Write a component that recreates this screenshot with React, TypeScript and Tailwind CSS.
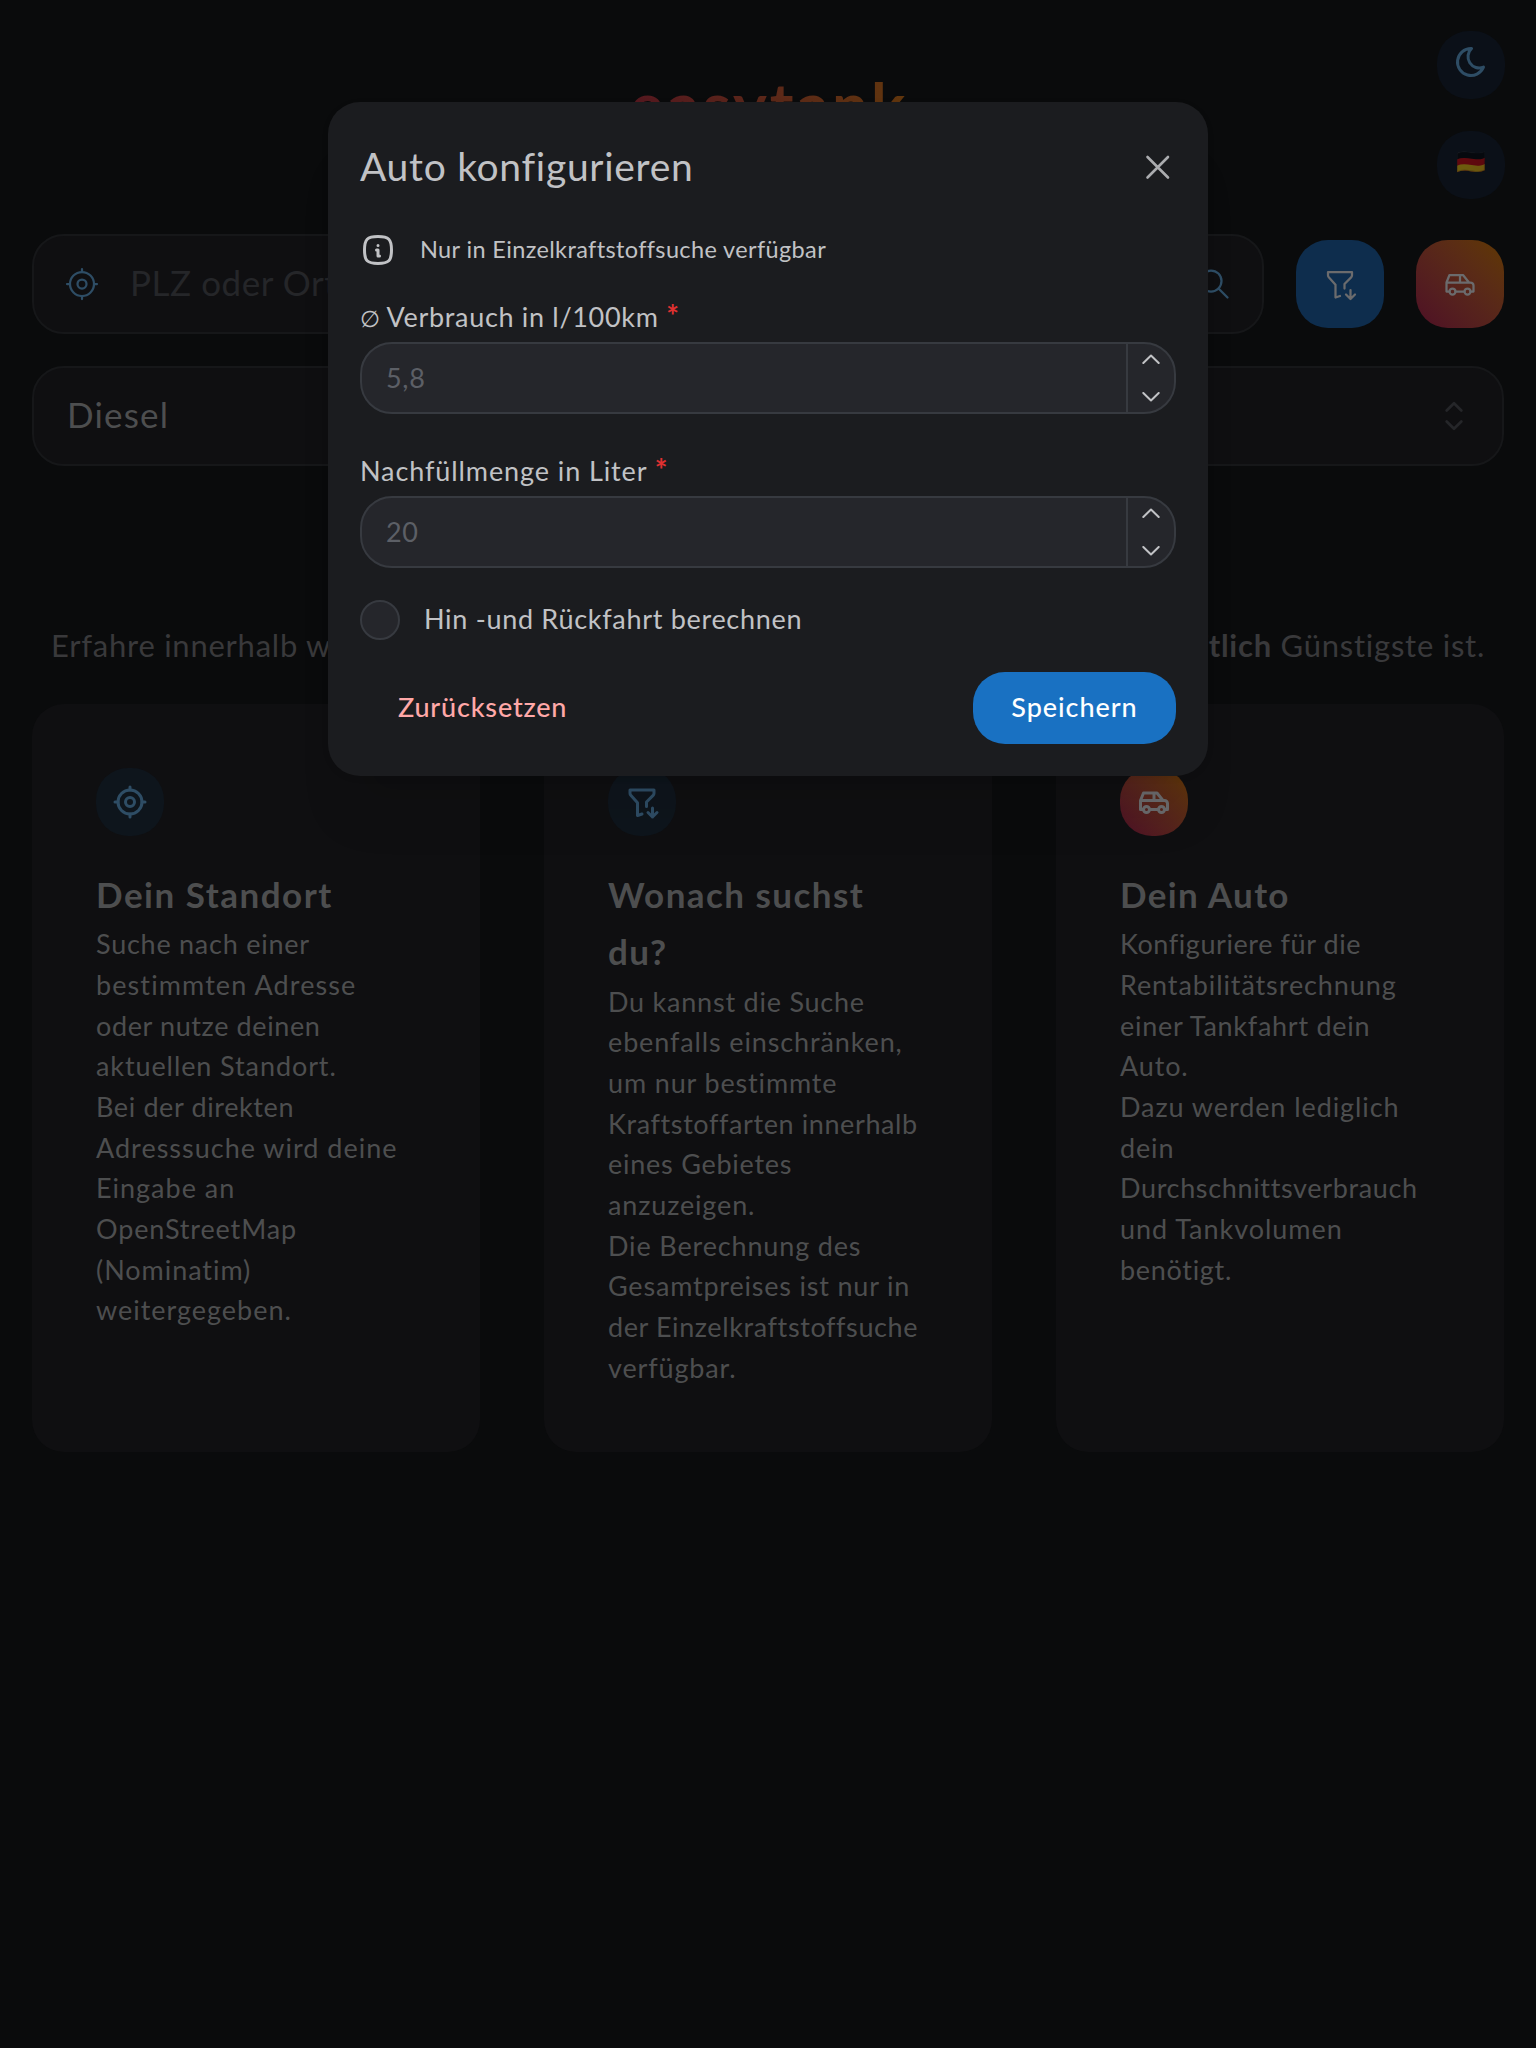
import type { ReactNode } from "react";

type IconProps = { size?: number; stroke?: number; className?: string };

function Icon({ size = 36, stroke = 1.5, className = "", children }: IconProps & { children: ReactNode }) {
  return (
    <svg
      width={size}
      height={size}
      viewBox="0 0 24 24"
      fill="none"
      stroke="currentColor"
      strokeWidth={stroke}
      strokeLinecap="round"
      strokeLinejoin="round"
      className={`shrink-0 ${className}`}
    >
      {children}
    </svg>
  );
}

const LocationIcon = (p: IconProps) => (
  <Icon {...p}>
    <circle cx="12" cy="12" r="3" />
    <circle cx="12" cy="12" r="8" />
    <path d="M12 2v2M12 20v2M20 12h2M2 12h2" />
  </Icon>
);

const FilterIcon = (p: IconProps) => (
  <Icon {...p}>
    <path d="M12 20l-3 1v-8.5l-4.48 -4.928a2 2 0 0 1 -.52 -1.345v-2.227h16v2.172a2 2 0 0 1 -.586 1.414l-4.414 4.414v3" />
    <path d="M19 16v6M22 19l-3 3l-3 -3" />
  </Icon>
);

const CarIcon = (p: IconProps) => (
  <Icon {...p}>
    <circle cx="7" cy="17" r="2" />
    <circle cx="17" cy="17" r="2" />
    <path d="M5 17h-2v-6l2 -5h9l4 5h1a2 2 0 0 1 2 2v4h-2m-4 0h-6m-6 -6h15m-6 0v-5" />
  </Icon>
);

const MoonIcon = (p: IconProps) => (
  <Icon {...p}>
    <path d="M12 3c.132 0 .263 0 .393 0a7.5 7.5 0 0 0 7.92 12.446a9 9 0 1 1 -8.313 -12.454z" />
  </Icon>
);

const SearchIcon = (p: IconProps) => (
  <Icon {...p}>
    <circle cx="10" cy="10" r="7" />
    <path d="M21 21l-6 -6" />
  </Icon>
);

const SelectorIcon = (p: IconProps) => (
  <Icon {...p}>
    <path d="M8 9l4 -4l4 4M16 15l-4 4l-4 -4" />
  </Icon>
);

const InfoIcon = (p: IconProps) => (
  <Icon {...p}>
    <path d="M12 9h.01M11 12h1v4h1" />
    <path d="M12 3c7.2 0 9 1.8 9 9s-1.8 9 -9 9s-9 -1.8 -9 -9s1.8 -9 9 -9z" />
  </Icon>
);

type Line = [text: string, tracking: string];

const standort: Line[] = [
  ["Suche nach einer", "tracking-[0.75px]"],
  ["bestimmten Adresse", "tracking-[1.1px]"],
  ["oder nutze deinen", "tracking-[0.62px]"],
  ["aktuellen Standort.", "tracking-[0.9px]"],
  ["Bei der direkten", "tracking-[0.62px]"],
  ["Adresssuche wird deine", "tracking-[1px]"],
  ["Eingabe an", "tracking-[1px]"],
  ["OpenStreetMap", "tracking-[0.85px]"],
  ["(Nominatim)", "tracking-[0.95px]"],
  ["weitergegeben.", "tracking-[0.98px]"],
];

const suche: Line[] = [
  ["Du kannst die Suche", "tracking-[0.77px]"],
  ["ebenfalls einschränken,", "tracking-[0.87px]"],
  ["um nur bestimmte", "tracking-[0.85px]"],
  ["Kraftstoffarten innerhalb", "tracking-[0.6px]"],
  ["eines Gebietes", "tracking-[0.75px]"],
  ["anzuzeigen.", "tracking-[0.85px]"],
  ["Die Berechnung des", "tracking-[0.85px]"],
  ["Gesamtpreises ist nur in", "tracking-[0.8px]"],
  ["der Einzelkraftstoffsuche", "tracking-[0.6px]"],
  ["verfügbar.", "tracking-[0.85px]"],
];

const auto: Line[] = [
  ["Konfiguriere für die", "tracking-[0.57px]"],
  ["Rentabilitätsrechnung", "tracking-[0.9px]"],
  ["einer Tankfahrt dein", "tracking-[0.73px]"],
  ["Auto.", "tracking-[0.85px]"],
  ["Dazu werden lediglich", "tracking-[0.92px]"],
  ["dein", "tracking-[0.85px]"],
  ["Durchschnittsverbrauch", "tracking-[0.65px]"],
  ["und Tankvolumen", "tracking-[0.97px]"],
  ["benötigt.", "tracking-[0.7px]"],
];

function InfoCard({ icon, iconStyle, title, lines }: { icon: ReactNode; iconStyle: string; title: Line[]; lines: Line[] }) {
  return (
    <section className="h-[748px] rounded-[32px] bg-[#0f0f11] px-16 pt-16">
      <div className={`flex size-[68px] items-center justify-center rounded-[32px] ${iconStyle}`}>{icon}</div>
      <h2 className="mt-[30px] text-[35px] leading-[57.3px] font-bold text-[#4d4e4f]">
        {title.map(([text, tracking]) => (
          <span key={text} className={`block whitespace-nowrap ${tracking}`}>{text}</span>
        ))}
      </h2>
      <p className="mt-px text-[27px] leading-[40.65px] text-[#4d4e4f]">
        {lines.map(([text, tracking]) => (
          <span key={text} className={`block whitespace-nowrap ${tracking}`}>{text}</span>
        ))}
      </p>
    </section>
  );
}

function NumberField({ label, tracking, placeholder }: { label: ReactNode; tracking: string; placeholder: string }) {
  return (
    <div>
      <label className={`block h-11 text-[27px] leading-[37px] whitespace-nowrap ${tracking}`}>
        {label} <span className="text-[30px] leading-none font-bold text-[#e03131]">*</span>
      </label>
      <div className="flex h-[72px] overflow-hidden rounded-[32px] border-2 border-[#373a40] bg-[#25262b]">
        <div className="flex flex-1 items-center pl-6 text-[27px] tracking-[0.7px] text-[#5c5f66]">{placeholder}</div>
        <div className="flex w-12 flex-col items-center justify-between border-l-2 border-[#373a40] pt-[10px] pr-px pb-[10px]">
          <svg width="18" height="10" viewBox="0 0 18 10" fill="none" stroke="currentColor" strokeWidth="2" strokeLinecap="round" strokeLinejoin="round">
            <path d="M1.3 9L9 1.5L16.7 9" />
          </svg>
          <svg width="18" height="10" viewBox="0 0 18 10" fill="none" stroke="currentColor" strokeWidth="2" strokeLinecap="round" strokeLinejoin="round">
            <path d="M1.3 1L9 8.5L16.7 1" />
          </svg>
        </div>
      </div>
    </div>
  );
}

export default function App() {
  return (
    <div className="relative h-[2048px] w-[1536px] overflow-hidden bg-[#0a0b0c] font-[Lato,sans-serif]">
      <header className="flex h-[234px] justify-between pt-[31px] pr-[31px]">
        <div className="w-[99px]" />
        <h1 className="mt-[34px] h-20 bg-linear-to-r from-[#55171f] to-[#61360c] bg-clip-text pl-0.5 text-[64px] leading-[80px] font-bold tracking-[3px] text-transparent">
          easytank
        </h1>
        <div className="flex flex-col gap-8">
          <button className="flex size-[68px] items-center justify-center rounded-[32px] bg-[#0b1018] pb-1.5 text-[#2e4d65]">
            <MoonIcon stroke={2} />
          </button>
          <button className="flex size-[68px] items-center justify-center rounded-[32px] bg-[#0b1018] pb-2">
            <span className="text-[24px] leading-none opacity-40">🇩🇪</span>
          </button>
        </div>
      </header>

      <div className="px-8">
        <div className="flex h-[100px] items-center gap-8">
          <div className="flex h-[100px] flex-1 items-center rounded-[32px] border-2 border-[#161719] bg-[#0f0f11] pr-[30px] pl-[30px]">
            <LocationIcon className="text-[#2e4d65]" />
            <span className="ml-[30px] flex-1 pb-[3px] text-[35px] tracking-[0.55px] text-[#252629]">PLZ oder Ort</span>
            <SearchIcon className="text-[#2e4d65]" />
          </div>
          <button className="flex size-[88px] items-center justify-center rounded-[32px] bg-[#0e2d4d] text-[#6b6b6d]">
            <FilterIcon />
          </button>
          <button className="flex size-[88px] items-center justify-center rounded-[32px] bg-linear-45 from-[#4e0f25] to-[#603800] text-[#6b6b6d]">
            <CarIcon />
          </button>
        </div>

        <div className="mt-8 flex h-[100px] items-center justify-between rounded-[32px] border-2 border-[#161719] bg-[#0f0f11] pr-[26px] pl-[33px]">
          <span className="pb-[3px] text-[35px] tracking-[1.2px] text-[#4d4e4f]">Diesel</span>
          <SelectorIcon size={44} className="text-[#252629]" />
        </div>

        <div className="mt-[154px] flex h-[50px] justify-between pr-[19px] pl-[19px] text-[31px] leading-[50px] tracking-[0.75px] whitespace-nowrap text-[#39393b]">
          <span>Erfahre innerhalb weniger</span>
          <span>
            <b>wirtschaftlich</b> Günstigste ist.
          </span>
        </div>

        <div className="mt-[34px] grid grid-cols-3 gap-16">
          <InfoCard
            icon={<LocationIcon stroke={2} />}
            iconStyle="bg-[#0e151c] text-[#2e4d65]"
            title={[["Dein Standort", "tracking-[1.5px]"]]}
            lines={standort}
          />
          <InfoCard
            icon={<FilterIcon stroke={2} />}
            iconStyle="bg-[#0e151c] text-[#2e4d65]"
            title={[["Wonach suchst", "tracking-[1.44px]"], ["du?", "tracking-[1.4px]"]]}
            lines={suche}
          />
          <InfoCard
            icon={<CarIcon stroke={2} />}
            iconStyle="bg-linear-45 from-[#4e0f25] to-[#603800] text-[#6b6b6d]"
            title={[["Dein Auto", "tracking-[1.35px]"]]}
            lines={auto}
          />
        </div>
      </div>

      <div
        role="dialog"
        className="absolute top-[102px] left-[328px] flex h-[674px] w-[880px] flex-col rounded-[32px] bg-[#1b1c1f] px-8 text-[#c1c2c5] shadow-[0_2px_6px_rgba(0,0,0,0.1),0_56px_46px_-14px_rgba(0,0,0,0.08)]"
      >
        <div className="mt-8 flex h-[68px] items-center justify-between">
          <h2 className="pb-1 text-[39px] leading-[64px] tracking-[0.7px]">Auto konfigurieren</h2>
          <svg width="28" height="28" viewBox="0 0 28 28" fill="none" stroke="#abacaf" strokeWidth="2.6" strokeLinecap="round" className="mr-1">
            <path d="M3.5 3L24 23.5M24 3L3.5 23.5" />
          </svg>
        </div>

        <div className="mt-[30px] flex h-9 items-center">
          <InfoIcon stroke={2} />
          <span className="ml-6 text-[23.5px] tracking-[0.37px]">Nur in Einzelkraftstoffsuche verfügbar</span>
        </div>

        <div className="mt-[30px] flex flex-col gap-[38px]">
          <NumberField
            label={<><span className="text-[23px] leading-none tracking-normal">∅</span> Verbrauch in l/100km</>}
            tracking="tracking-[0.68px]"
            placeholder="5,8"
          />
          <NumberField label="Nachfüllmenge in Liter" tracking="tracking-[0.9px]" placeholder="20" />
        </div>

        <div className="mt-8 flex h-10 items-center">
          <span className="size-10 rounded-full border-2 border-[#373a40] bg-[#25262b]" />
          <span className="ml-6 pb-[3px] text-[27px] leading-[37px] tracking-[0.7px]">Hin -und Rückfahrt berechnen</span>
        </div>

        <div className="mt-8 flex h-[72px] justify-between">
          <button className="pb-0.5 pl-[38px] text-[27px] font-medium tracking-[0.8px] text-[#ffa8a8]">Zurücksetzen</button>
          <button className="w-[203px] rounded-[32px] bg-[#1971c2] pb-0.5 text-[27px] font-medium tracking-[0.95px] text-white">
            Speichern
          </button>
        </div>
      </div>
    </div>
  );
}
